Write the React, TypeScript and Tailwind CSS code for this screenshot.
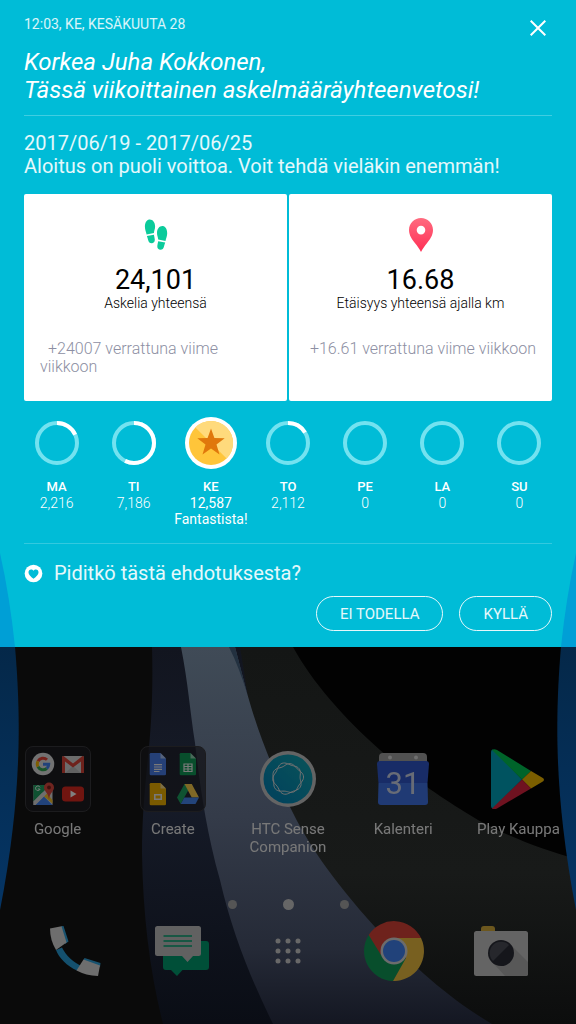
import React from "react";

const footPath = (
  <>
    <path d="M4.600.600C2 .9.300 4 .300 7.800c0 3 1.200 5.200 1.700 7.600l7.300-1.300c0-2 1.200-4 1.200-6.700C10.500 3.200 7.800.200 4.600.600Z" />
    <path d="m2.300 17 7-1.200c.2 1.500.8 3 .9 4.700.1 2-.8 3.500-2.700 3.800-2.200.2-3.400-1-3.900-3-.3-1.500-.8-2.800-1.300-4.300Z" />
  </>
);

function StepsIcon() {
  return (
    <svg viewBox="0 0 24 34" className="h-[34px] w-6" fill="#0bcb9b" aria-hidden="true">
      <g transform="translate(.6 1)">{footPath}</g>
      <g transform="matrix(-1 0 0 1 23.500 7.500)">{footPath}</g>
    </svg>
  );
}

function PinIcon() {
  return (
    <svg viewBox="0 0 24 34" className="h-[34px] w-6" aria-hidden="true">
      <defs>
        <linearGradient id="pin" x1="0" y1="0" x2="0" y2="1">
          <stop offset="0" stopColor="#ff6b7f" />
          <stop offset="1" stopColor="#ff2f55" />
        </linearGradient>
      </defs>
      <path
        fill="url(#pin)"
        fillRule="evenodd"
        d="M12 0C5.400 0 0 5.300 0 12c0 5.500 3.200 9.500 6.300 13.500C8.500 28.300 10.500 31 12 34c1.500-3 3.500-5.700 5.700-8.500C20.800 21.500 24 17.500 24 12 24 5.300 18.600 0 12 0Zm0 7.800a4.300 4.300 0 1 1 0 8.600 4.300 4.300 0 0 1 0-8.600Z"
      />
    </svg>
  );
}

function Ring({ share }: { share: number }) {
  const length = 2 * Math.PI * 20;
  return (
    <svg viewBox="0 0 52 52" className="size-[52px]" fill="none" aria-hidden="true">
      <circle cx="26" cy="26" r="20" stroke="#73e2f0" strokeWidth="4" />
      {share > 0 && (
        <circle
          cx="26"
          cy="26"
          r="20"
          stroke="#fff"
          strokeWidth="4"
          strokeDasharray={`${length * share} ${length}`}
          transform="rotate(-90 26 26)"
        />
      )}
    </svg>
  );
}

function StarBadge() {
  return (
    <svg viewBox="0 0 52 52" className="size-[52px]" aria-hidden="true">
      <circle cx="26" cy="26" r="26" fill="#fff" />
      <circle cx="26" cy="26" r="22" fill="#ffc53a" />
      <path d="M10.400 10.400A22 22 0 0 1 41.600 41.600Z" fill="#ffda7c" />
      <path
        d="m26 11.500 3.400 9.600 10.300.2-8.200 6.200 3 9.900L26 31.500l-8.500 5.900 3-9.900-8.200-6.200 10.300-.2Z"
        fill="#e0780c"
      />
    </svg>
  );
}

type StatProps = { icon: React.ReactNode; value: string; label: string; children: React.ReactNode };

function StatCard({ icon, value, label, children }: StatProps) {
  return (
    <article className="flex h-[207px] flex-col items-center rounded-xs bg-white px-4 pt-6">
      {icon}
      <p className="mt-3 text-[27px] leading-8 text-black">{value}</p>
      <p className="text-[14px] leading-[14px] font-light text-black">{label}</p>
      <div className="mt-[30px] w-full text-[16px] leading-[18px] font-light text-[#8d8fa3]">{children}</div>
    </article>
  );
}

const days = [
  { name: "MA", steps: "2,216", share: 0.18 },
  { name: "TI", steps: "7,186", share: 0.57 },
  { name: "KE", steps: "12,587", share: 1, note: "Fantastista!" },
  { name: "TO", steps: "2,112", share: 0.16 },
  { name: "PE", steps: "0", share: 0 },
  { name: "LA", steps: "0", share: 0 },
  { name: "SU", steps: "0", share: 0 },
];

function Wallpaper() {
  return (
    <svg
      viewBox="0 0 576 377"
      preserveAspectRatio="none"
      className="absolute inset-0 size-full"
      aria-hidden="true"
    >
      <defs>
        <linearGradient id="band" x1="0" y1="0" x2="0" y2="1">
          <stop offset="0" stopColor="#404b57" />
          <stop offset=".45" stopColor="#343b49" />
          <stop offset=".8" stopColor="#252a37" />
          <stop offset="1" stopColor="#141722" />
        </linearGradient>
        <linearGradient id="navy" x1="0" y1="0" x2="0" y2="1">
          <stop offset="0" stopColor="#12151f" />
          <stop offset=".4" stopColor="#161b28" />
          <stop offset="1" stopColor="#0a0d15" />
        </linearGradient>
        <linearGradient id="ash" gradientUnits="userSpaceOnUse" x1="0" y1="0" x2="0" y2="377">
          <stop offset="0" stopColor="#141615" />
          <stop offset=".6" stopColor="#181a19" />
          <stop offset="1" stopColor="#0c0d0d" />
        </linearGradient>
        <linearGradient id="side" x1="0" y1="0" x2="0" y2="1">
          <stop offset="0" stopColor="#052849" />
          <stop offset="1" stopColor="#053565" />
        </linearGradient>
      </defs>
      <path fill="#0a0a0a" d="M0 0h576v377H0Z" />
      <path fill="#020202" d="M260 0h316v377H260Z" />
      <path
        fill="url(#ash)"
        d="M220 0h73C312 35 345 72 380 103C418 135 440 150 478 173C515 193 545 203 576 212V377H300Z"
      />
      <path
        fill="url(#navy)"
        d="M152 0C153 35 152 70 149 100C145 140 142 170 142 206C143 270 150 325 163 377H300L240 0Z"
      />
      <path
        fill="url(#band)"
        d="M181 0C188 35 190 65 195 96C199 130 205 180 220 233C232 285 250 330 273 377H492C450 352 420 325 375 280C330 230 307 195 290 160C270 115 258 85 247 46L235 0Z"
      />
      <path fill="#233140" d="M229 0h6L247 46C242 30 236 14 229 0Z" />
      <path fill="url(#side)" d="M0 0H15C21 70 22 150 0 263Z" />
      <path fill="url(#side)" d="M576 0H561C555 70 554 150 576 263Z" />
    </svg>
  );
}

function GoogleIcon() {
  return (
    <svg viewBox="0 0 48 48" className="size-6" aria-hidden="true">
      <circle cx="24" cy="24" r="22.500" fill="#e4e4e4" />
      <g fill="none" strokeWidth="6">
        <path stroke="#ea4335" d="M14 18.500A11.500 11.500 0 0 1 32 15.500" />
        <path stroke="#fbbc05" d="M14 29.500A11.500 11.500 0 0 1 14 18.500" />
        <path stroke="#34a853" d="M31.500 33A11.500 11.500 0 0 1 14 29.500" />
        <path stroke="#4285f4" d="M24 24.500h11.500a11.500 11.500 0 0 1-4 8.500" />
      </g>
    </svg>
  );
}

function GmailIcon() {
  return (
    <svg viewBox="0 0 24 24" className="size-6" aria-hidden="true">
      <rect x="1" y="4" width="22" height="17" rx="1.500" fill="#d8d8d8" />
      <path d="m4 21 8-7 8 7Z" fill="#c2c2c2" />
      <path d="M1 5.500C1 4.600 1.600 4 2.500 4L12 11.500 21.500 4c.9 0 1.500.6 1.500 1.500V21h-3V9.500l-8 6-8-6V21H1Z" fill="#db4437" />
    </svg>
  );
}

function MapsIcon() {
  return (
    <svg viewBox="0 0 24 24" className="size-6" aria-hidden="true">
      <path d="M2.500 3h19v20h-19Z" fill="#dcdcdc" />
      <path d="M2.500 3H19L2.500 19.500Z" fill="#1da261" />
      <path d="m4.500 23 8.500-8.500 8.500 8.500Z" fill="#4285f4" />
      <path d="m2.500 19.500 9-9 2.500 2.500L4 23H2.500Z" fill="#dcdcdc" />
      <path d="m13 14.500 3-3L21.500 18v3.500Z" fill="#fbc52c" />
      <path d="M8.700 7H6.800M9 5.300A2.300 2.300 0 1 0 9.100 7" fill="none" stroke="#fff" strokeWidth="1" />
      <path d="M18 .5a5 5 0 0 0-5 5c0 4 4.400 5 5 12 .6-7 5-8 5-12a5 5 0 0 0-5-5Z" fill="#e04a3f" />
      <circle cx="18" cy="5.500" r="1.900" fill="#7e1f1a" />
    </svg>
  );
}

function YouTubeIcon() {
  return (
    <svg viewBox="0 0 24 24" className="size-6" aria-hidden="true">
      <rect x="1" y="4.500" width="22" height="15" rx="3.500" fill="#e02a20" />
      <path d="M9.500 8.500v7l6-3.500Z" fill="#fff" />
    </svg>
  );
}

function FileIcon({ kind }: { kind: "doc" | "sheet" | "slide" }) {
  const body = kind === "doc" ? "#4a80ee" : kind === "sheet" ? "#109d58" : "#f4b400";
  return (
    <svg viewBox="0 0 24 24" className="size-6" aria-hidden="true">
      <path d="M5 1h9.500l5.500 5.500V22a1.300 1.300 0 0 1-1.300 1.300H5A1.300 1.300 0 0 1 3.700 22V2.300A1.300 1.300 0 0 1 5 1Z" fill={body} />
      <path d="M14.500 1 20 6.500h-5.500Z" fill="#fff" opacity=".55" />
      {kind === "doc" && <path d="M8 12.700h8M8 15h8M8 17.300h8M8 19.500h5.500" stroke="#f1f1f1" strokeWidth="1.200" />}
      {kind === "sheet" && (
        <path d="M8 12h8v7.500H8Zm0 2.500h8M8 17h8M12 12v7.500" fill="none" stroke="#f1f1f1" strokeWidth="1.200" />
      )}
      {kind === "slide" && <path d="M8.800 12.800h6.400v4.400H8.800Z" fill="none" stroke="#f1f1f1" strokeWidth="1.600" />}
    </svg>
  );
}

function DriveIcon() {
  return (
    <svg viewBox="0 0 24 24" className="size-6" aria-hidden="true">
      <path d="M8.500 2h7.300L8.400 15.300 4.700 22 1 15.500Z" fill="#1da462" />
      <path d="M8.500 2h7.300L23 15.500h-7.300Z" fill="#ffd04b" />
      <path d="M8.300 15.500H23L19.500 22H4.700Z" fill="#4688f4" />
    </svg>
  );
}

function Folder({ children }: { children: React.ReactNode }) {
  return (
    <span className="grid size-[66px] grid-cols-[24px_24px] place-content-center gap-[6px] rounded-lg border border-[#38383c] bg-[#1f1f26]/70">
      {children}
    </span>
  );
}

function rosette(phase: number) {
  const points = Array.from({ length: 72 }, (_, i) => {
    const angle = (i * Math.PI) / 36;
    const radius = 14.4 + 1.1 * Math.cos(5 * angle + phase) + 0.7 * Math.cos(2 * angle + phase);
    return `${(28.5 + radius * Math.cos(angle)).toFixed(2)} ${(28.5 + radius * Math.sin(angle)).toFixed(2)}`;
  });
  return `M${points.join("L")}Z`;
}

function CompanionIcon() {
  return (
    <svg viewBox="0 0 58 58" className="size-[58px]" aria-hidden="true">
      <defs>
        <linearGradient id="sense" x1="0" y1="1" x2="1" y2="0">
          <stop offset="0" stopColor="#0080b8" />
          <stop offset="1" stopColor="#12a8b4" />
        </linearGradient>
      </defs>
      <circle cx="29" cy="29" r="28" fill="#c8c8c8" />
      <circle cx="29" cy="29" r="24.500" fill="url(#sense)" />
      <g fill="none" stroke="#e2e2e2" strokeWidth="1">
        <path d={rosette(0.6)} />
        <path d={rosette(3.4)} />
      </g>
    </svg>
  );
}

function CalendarIcon() {
  return (
    <svg viewBox="0 0 54 54" className="size-[54px]" aria-hidden="true">
      <path d="M3 10V5a4 4 0 0 1 4-4h40a4 4 0 0 1 4 4v5Z" fill="#a2a2a2" />
      <circle cx="14" cy="5.500" r="2" fill="#ddd" />
      <circle cx="40" cy="5.500" r="2" fill="#ddd" />
      <path d="M1 12q0-3 3-3h46q3 0 3 3L51.500 31h-49Z" fill="#3059cd" />
      <path d="M2.500 31h49l.5 19q0 3-3 3H5q-3 0-3-3Z" fill="#3f74e8" />
      <text x="27" y="42" textAnchor="middle" fill="#d0d8ec" className="text-[31px]">
        31
      </text>
    </svg>
  );
}

function PlayIcon() {
  return (
    <svg viewBox="0 0 54 60" className="h-[60px] w-[54px]" aria-hidden="true">
      <path d="M2 .5 31 30.500 2 59.500q-2 0-2-3v-53q0-3 2-3Z" fill="#00a6bf" />
      <path d="M1 1q2-1.500 5 0L40 22l-9 8.500Z" fill="#00c853" />
      <path d="m40 22 11 6.500q4 2 0 4.500l-11 6.500-9-9Z" fill="#f5bd00" />
      <path d="m31 30.500 9 9L6 59.500q-3 1.500-5 0Z" fill="#dd2440" />
    </svg>
  );
}

function PhoneIcon() {
  return (
    <svg viewBox="0 0 52 52" className="size-[52px]" aria-hidden="true">
      <path d="m7 25 6-2.500C17 31 25 38 33 41l-5 4.500C18 41 10 33 7 25Z" fill="#27a0dc" />
      <path d="m12 1.200 2.500-.2 5 15.500L16 19ZM34 36l1.500-3L51.500 38l-.5 4Z" fill="#30a5de" />
      <path d="M1 3.500 12.500 1.200 17.500 17.500 7 25Q1 15 1 3.500Z" fill="#dcdcdc" />
      <path d="m34.500 34.500 16.500 6-2 10.500Q37 50.500 27.500 45.500Z" fill="#dcdcdc" />
    </svg>
  );
}

function MessagesIcon() {
  return (
    <svg viewBox="0 0 56 52" className="h-[52px] w-14" aria-hidden="true">
      <path d="M12 16h40q3 0 3 3v23q0 3-3 3H28.500L23 51l-6-6h-5q-3 0-3-3V19q0-3 3-3Z" fill="#009e70" />
      <path d="M3.500 1h41Q47 1 47 3.500v25q0 2.500-2.500 2.500H39l-5.500 6L28 31H3.500Q1 31 1 28.500v-25Q1 1 3.500 1Z" fill="#c2c2c2" />
      <path d="M9.500 11H38M9.500 16H38M9.500 21H38" stroke="#00a877" strokeWidth="1.600" />
    </svg>
  );
}

function AppsIcon() {
  return (
    <svg viewBox="0 0 26 26" className="size-[26px]" fill="#d0d0d0" aria-hidden="true">
      {[3, 13, 23].map((y) => [3, 13, 23].map((x) => <circle key={`${x}-${y}`} cx={x} cy={y} r="2.500" />))}
    </svg>
  );
}

function ChromeIcon() {
  return (
    <svg viewBox="0 0 60 60" className="size-[60px]" aria-hidden="true">
      <path d="M30 30 4.700 14A30 30 0 0 1 57 17Z" fill="#db4437" />
      <path d="M30 30 4.700 14A30 30 0 0 0 29 60L42 38Z" fill="#0f9d58" />
      <path d="M30 17h27A30 30 0 0 1 29 60L42 37Z" fill="#f0c040" />
      <path d="M30 17 4.700 14 17 34Z" fill="#db4437" />
      <circle cx="30" cy="30" r="13.500" fill="#d8d8d8" />
      <circle cx="30" cy="30" r="11" fill="#4285f4" />
    </svg>
  );
}

function CameraIcon() {
  return (
    <svg viewBox="0 0 56 52" className="h-[52px] w-14" aria-hidden="true">
      <path d="M8 8V4q0-3 3-3h8q3 0 3 3v4Z" fill="#d8ae3c" />
      <rect x="1" y="6" width="54" height="45" rx="2.500" fill="#c8c8c8" />
      <path d="M38 20 55 37v11.500q0 2.500-2.500 2.500H32L19 37Z" fill="#b0b0b0" />
      <circle cx="28" cy="28" r="13" fill="#2a2c36" />
      <path d="M20 36A11.300 11.300 0 0 1 36 20Z" fill="#4b4e58" />
    </svg>
  );
}

const apps = [
  {
    name: "Google",
    icon: (
      <Folder>
        <GoogleIcon />
        <GmailIcon />
        <MapsIcon />
        <YouTubeIcon />
      </Folder>
    ),
  },
  {
    name: "Create",
    icon: (
      <Folder>
        <FileIcon kind="doc" />
        <FileIcon kind="sheet" />
        <FileIcon kind="slide" />
        <DriveIcon />
      </Folder>
    ),
  },
  { name: "HTC Sense Companion", icon: <CompanionIcon /> },
  { name: "Kalenteri", icon: <CalendarIcon /> },
  { name: "Play Kauppa", icon: <PlayIcon /> },
];

const dock = [
  { name: "Puhelin", icon: <PhoneIcon /> },
  { name: "Viestit", icon: <MessagesIcon /> },
  { name: "Sovellukset", icon: <AppsIcon /> },
  { name: "Chrome", icon: <ChromeIcon /> },
  { name: "Kamera", icon: <CameraIcon /> },
];

export default function App() {
  return (
    <div className="flex min-h-screen flex-col bg-black font-['Roboto',sans-serif]">
      <section className="relative bg-[#00bcd7] px-6 pt-4 pb-4 text-white">
        <svg
          viewBox="0 0 576 94"
          preserveAspectRatio="none"
          className="absolute bottom-0 left-0 h-[94px] w-full"
          fill="#009fd6"
          aria-hidden="true"
        >
          <path d="M0 0Q10 45 15 94H0Z" />
          <path d="M576 0Q566 45 561 94H576Z" />
        </svg>

        <header className="flex items-start justify-between">
          <div>
            <p className="text-[14px] leading-4 text-white/85">12:03, KE, KESÄKUUTA 28</p>
            <h1 className="mt-4 text-[24px] leading-7 italic">
              Korkea Juha Kokkonen,
              <br />
              Tässä viikoittainen askelmääräyhteenvetosi!
            </h1>
          </div>
          <button type="button" aria-label="Sulje" className="mt-1 mr-[6px]">
            <svg viewBox="0 0 16 16" className="size-4" stroke="#fff" strokeWidth="2" aria-hidden="true">
              <path d="m.7.700 14.600 14.600M15.300.700.700 15.300" />
            </svg>
          </button>
        </header>

        <div className="mt-[11px] border-t border-white/25 pt-4 text-[20px] leading-[23px] text-white/90">
          <p>2017/06/19 - 2017/06/25</p>
          <p>Aloitus on puoli voittoa. Voit tehdä vieläkin enemmän!</p>
        </div>

        <div className="mt-4 grid grid-cols-2 gap-[2px]">
          <StatCard icon={<StepsIcon />} value="24,101" label="Askelia yhteensä">
            <p className="indent-2">+24007 verrattuna viime viikkoon</p>
          </StatCard>
          <StatCard icon={<PinIcon />} value="16.68" label="Etäisyys yhteensä ajalla km">
            <p className="text-right">+16.61 verrattuna viime viikkoon</p>
          </StatCard>
        </div>

        <ul className="-mx-[6px] mt-4 grid grid-cols-7 text-center text-[14px] leading-4">
          {days.map((day) => (
            <li key={day.name} className="flex flex-col items-center">
              {day.note ? <StarBadge /> : <Ring share={day.share} />}
              <span className="mt-[10px] text-[13px] font-medium">{day.name}</span>
              <span className={day.note ? "" : "font-light"}>{day.steps}</span>
              {day.note && <span>{day.note}</span>}
            </li>
          ))}
        </ul>

        <footer className="relative mt-4 border-t border-white/20 pt-[17px]">
          <div className="flex items-center gap-[11px]">
            <svg viewBox="0 0 20 20" className="size-[19px]" aria-hidden="true">
              <circle cx="10" cy="10" r="9.300" fill="#fff" />
              <path
                d="M10 15.500C7 13 4.700 11.200 4.700 8.600c0-1.700 1.200-2.900 2.700-2.900 1.100 0 2 .5 2.600 1.500.6-1 1.500-1.500 2.600-1.500 1.500 0 2.700 1.200 2.700 2.900 0 2.600-2.300 4.400-5.300 6.900Z"
                fill="#00bcd7"
              />
            </svg>
            <p className="text-[20px] leading-6 text-white/90">Piditkö tästä ehdotuksesta?</p>
          </div>
          <div className="mt-[11px] flex justify-end gap-4 text-[15px] leading-5 text-white/90">
            <button type="button" className="h-[35px] rounded-full border border-white/90 px-[23px]">
              EI TODELLA
            </button>
            <button type="button" className="h-[35px] rounded-full border border-white/90 px-[23px]">
              KYLLÄ
            </button>
          </div>
        </footer>
      </section>

      <main className="relative flex-1 overflow-hidden">
        <Wallpaper />
        <div className="relative pt-[99px] text-[#f0f0f0] brightness-50">
          <ul className="grid grid-cols-5">
            {apps.map((app) => (
              <li key={app.name}>
                <a href="#" className="flex flex-col items-center text-center text-[15px] leading-[18px]">
                  <span className="flex h-[66px] items-center justify-center">{app.icon}</span>
                  <span className="mt-2 h-9 max-w-[100px]">{app.name}</span>
                </a>
              </li>
            ))}
          </ul>
          <div className="mt-[42px] flex h-3 items-center justify-center gap-[46px]" aria-hidden="true">
            <span className="size-[9px] rounded-full bg-[#aaa]" />
            <span className="size-[11px] rounded-full bg-[#ccc]" />
            <span className="size-[9px] rounded-full bg-[#aaa]" />
          </div>
          <nav className="mt-[11px] grid grid-cols-5 px-[22px]">
            {dock.map((item) => (
              <a key={item.name} href="#" aria-label={item.name} className="flex h-[60px] items-center justify-center">
                {item.icon}
              </a>
            ))}
          </nav>
        </div>
      </main>
    </div>
  );
}
